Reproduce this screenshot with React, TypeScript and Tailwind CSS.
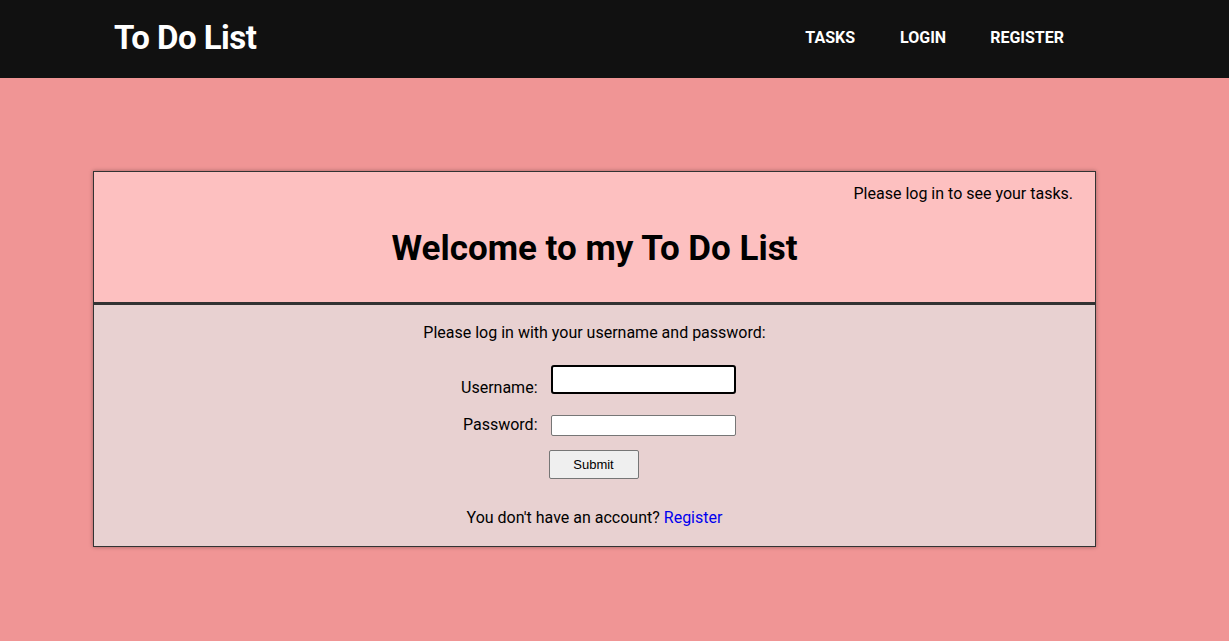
export default function App() {
    return (
        <div className="min-h-[641px] bg-[#f09595] font-['Roboto',sans-serif]">
            <header className="flex h-[78px] items-center justify-between bg-[#111111] pl-[114px] pr-[165px]">
                <h1 className="mt-[-2px] text-[33px] font-bold tracking-[-0.5px] text-white">To Do List</h1>
                <nav className="mt-[-2px] flex gap-[44px] text-[16px] font-bold text-white">
                    <a href="#" className="ml-[1px]">TASKS</a>
                    <a href="#" className="ml-[1px]">LOGIN</a>
                    <a href="#">REGISTER</a>
                </nav>
            </header>
            <main className="pl-[93px] pt-[93px]">
                <div className="w-[1003px] border border-[#333] shadow-[0_0_4px_rgba(0,0,0,0.35)]">
                    <section className="h-[133px] border-b-[3px] border-[#333] bg-[#fdc0c0] px-[22px] pt-[10px] text-black">
                        <p className="text-right text-[16px]">Please log in to see your tasks.</p>
                        <h2 className="mt-[22px] text-center text-[35px] font-bold leading-[42px]">Welcome to my To Do List</h2>
                    </section>
                    <section className="flex h-[241px] flex-col items-center bg-[#e8d1d1] pt-[16px] text-[16px] text-black">
                        <p>Please log in with your username and password:</p>
                        <form className="mt-[20px] ml-[-2px] flex flex-col items-center">
                            <div className="flex h-[29px] items-start gap-[13px]">
                                <label className="mt-[11px] w-[86px] text-right">Username:</label>
                                <input
                                    type="text"
                                    className="h-[29px] w-[185px] rounded-[3px] border-2 border-black bg-white outline-none"
                                />
                            </div>
                            <div className="mt-[21px] flex h-[21px] items-start gap-[13px]">
                                <label className="mt-[-2px] w-[86px] text-right">Password:</label>
                                <input
                                    type="password"
                                    className="h-[21px] w-[185px] rounded-[2px] border border-[#767676] bg-white"
                                />
                            </div>
                            <button
                                type="button"
                                className="mt-[14px] h-[29px] w-[90px] rounded-[2px] border border-[#767676] bg-[#efefef] font-['Liberation_Sans',sans-serif] text-[13px] text-black"
                            >
                                Submit
                            </button>
                        </form>
                        <p className="mt-[27px]">
                            You don't have an account? <a href="#" className="text-[#0000ee]">Register</a>
                        </p>
                    </section>
                </div>
            </main>
        </div>
    );
}
